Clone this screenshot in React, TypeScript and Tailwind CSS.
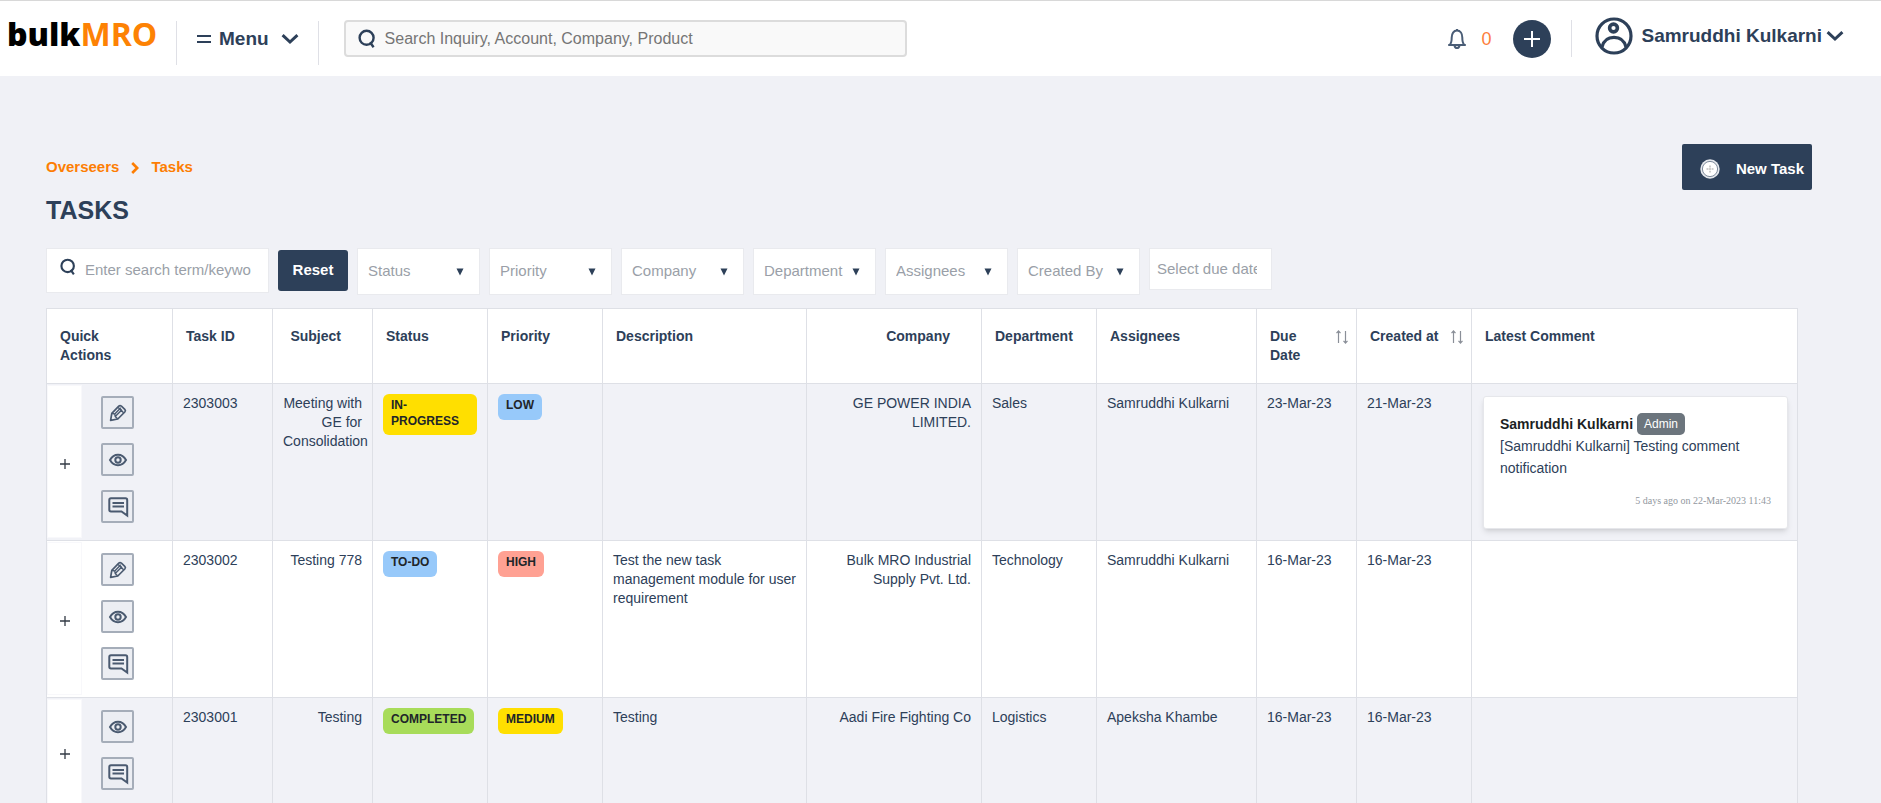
import type { ReactNode } from "react";

type Action = "edit" | "view" | "comment";

interface Comment {
  author: string;
  role: string;
  text: string;
  time: string;
}

interface Task {
  id: string;
  subject: string;
  status: string;
  priority: string;
  description: string;
  company: string;
  department: string;
  assignee: string;
  due: string;
  created: string;
  actions: Action[];
  comment?: Comment;
}

const tasks: Task[] = [
  {
    id: "2303003",
    subject: "Meeting with GE for Consolidation",
    status: "IN-PROGRESS",
    priority: "LOW",
    description: "",
    company: "GE POWER INDIA LIMITED.",
    department: "Sales",
    assignee: "Samruddhi Kulkarni",
    due: "23-Mar-23",
    created: "21-Mar-23",
    actions: ["edit", "view", "comment"],
    comment: {
      author: "Samruddhi Kulkarni",
      role: "Admin",
      text: "[Samruddhi Kulkarni] Testing comment notification",
      time: "5 days ago on 22-Mar-2023 11:43",
    },
  },
  {
    id: "2303002",
    subject: "Testing 778",
    status: "TO-DO",
    priority: "HIGH",
    description: "Test the new task management module for user requirement",
    company: "Bulk MRO Industrial Supply Pvt. Ltd.",
    department: "Technology",
    assignee: "Samruddhi Kulkarni",
    due: "16-Mar-23",
    created: "16-Mar-23",
    actions: ["edit", "view", "comment"],
  },
  {
    id: "2303001",
    subject: "Testing",
    status: "COMPLETED",
    priority: "MEDIUM",
    description: "Testing",
    company: "Aadi Fire Fighting Co",
    department: "Logistics",
    assignee: "Apeksha Khambe",
    due: "16-Mar-23",
    created: "16-Mar-23",
    actions: ["view", "comment"],
  },
];

const badgeColors: Record<string, string> = {
  "IN-PROGRESS": "bg-[#ffdf00]",
  MEDIUM: "bg-[#ffdf00]",
  LOW: "bg-[#97c9fa]",
  "TO-DO": "bg-[#97c9fa]",
  HIGH: "bg-[#ffa193]",
  COMPLETED: "bg-[#a8dc5a]",
};

const filters = ["Status", "Priority", "Company", "Department", "Assignees", "Created By"];

function SearchIcon({ className }: { className: string }) {
  return (
    <svg viewBox="0 0 18 20" className={className} fill="none" stroke="currentColor" strokeWidth="2.4" aria-hidden="true">
      <circle cx="8.6" cy="8.8" r="7" />
      <path d="M12 13.200l3.600 5" />
    </svg>
  );
}

function ChevronIcon({ className }: { className: string }) {
  return (
    <svg viewBox="0 0 18 12" className={className} fill="none" stroke="currentColor" strokeWidth="3" aria-hidden="true">
      <path d="M1.600 2.200L9 9l7.400-6.800" />
    </svg>
  );
}

function BellIcon() {
  return (
    <svg viewBox="0 0 20 22" className="h-[22px] w-5" fill="none" stroke="#4a5d76" strokeWidth="2" aria-hidden="true">
      <path d="M1.200 17h17.600M3 16.600c1.600-1.800 1.700-3.600 1.700-7C4.700 5.700 6.600 2.600 10 2.600s5.300 3.100 5.300 7c0 3.400.1 5.200 1.700 7" strokeLinejoin="round" />
      <path d="M7.500 17.500c.3 1.800 1.200 2.600 2.500 2.600s2.200-.8 2.500-2.600M10 2.800V1" />
    </svg>
  );
}

function UserIcon() {
  return (
    <svg viewBox="0 0 38 38" className="size-[38px] shrink-0" fill="none" stroke="currentColor" strokeWidth="3.200" aria-hidden="true">
      <circle cx="19" cy="19" r="17" />
      <circle cx="18.500" cy="11" r="3.900" strokeWidth="3.600" />
      <path d="M7 30c1.500-6 6-9.600 12-9.600S29.500 24 31 30" />
    </svg>
  );
}

const actionIcons: Record<Action, ReactNode> = {
  edit: (
    <svg viewBox="0 0 20 20" className="size-5 shrink-0" fill="none" stroke="currentColor" strokeWidth="1.700" strokeLinejoin="round" aria-hidden="true">
      <path d="M2.600 17.400l1.200-7L10.800 3.200q1.200-1.200 2.600 0l3.400 3.200q1.200 1.200 0 2.600L9.800 16z" />
      <path d="M3.800 10.400l3 .6.400 2.400 2.600 2.600M6.800 11l6-6.200M7.200 13.400l6.800-6.600M10.200 4.400l5.400 5.400" strokeWidth="1.400" />
    </svg>
  ),
  view: (
    <svg viewBox="0 0 20 20" className="size-5 shrink-0" fill="none" stroke="currentColor" strokeWidth="2" aria-hidden="true">
      <path d="M2 10c2-3.600 4.700-5.200 8-5.200s6 1.600 8 5.200c-2 3.600-4.700 5.200-8 5.200S4 13.600 2 10z" />
      <circle cx="10" cy="10" r="2.700" />
    </svg>
  ),
  comment: (
    <svg viewBox="0 0 22 22" className="size-[22px] shrink-0" fill="none" stroke="currentColor" strokeWidth="2" aria-hidden="true">
      <path d="M4 2.300h14.500q1.700 0 1.700 1.700v15.500l-5.700-4H4q-1.700 0-1.700-1.700V4q0-1.700 1.700-1.700z" />
      <path d="M5.500 7h11.500M5.500 10.500h11.500" strokeWidth="1.900" />
    </svg>
  ),
};

const actionLabels: Record<Action, string> = { edit: "Edit task", view: "View task", comment: "Comments" };

function Badge({ label }: { label: string }) {
  return (
    <span className={`inline-block min-h-[26px] rounded-md px-2 pt-[3px] pb-[6px] text-xs leading-4 font-bold text-[#212529] ${badgeColors[label]}`}>
      {label}
    </span>
  );
}

function Header() {
  return (
    <header className="flex h-[76px] items-center border-t border-[#d8d8d8] bg-white">
      <a href="#home" aria-label="bulkMRO" className="w-[170px] pb-[10px] pl-[7px] font-['Open_Sans',sans-serif] text-[32px] leading-10">
        <span className="font-extrabold text-black">bulk</span>
        <span className="font-bold text-[#fd8204]">MRO</span>
      </a>
      <div className="mt-2 ml-[6px] flex h-11 items-center border-x border-[#dfe0e6] pr-[19px] pl-5">
        <button type="button" className="flex items-center pb-[7px] text-[19px] font-bold">
          <span className="mr-2 block h-2 w-[14px] border-y-2 border-current" />
          Menu
          <ChevronIcon className="ml-3 h-3 w-[18px]" />
        </button>
      </div>
      <div className="ml-[25px] flex h-[37px] w-[563px] items-center rounded border-2 border-[#dcdcdc] bg-[#f9f9f9] px-3">
        <SearchIcon className="h-5 w-[18px] shrink-0" />
        <input
          type="search"
          aria-label="Search"
          placeholder="Search Inquiry, Account, Company, Product"
          className="ml-[9px] min-w-0 flex-1 bg-transparent text-base outline-none placeholder:text-[#757575]"
        />
      </div>
      <div className="ml-auto flex items-center">
        <button type="button" className="flex items-center gap-[14px] text-lg text-[#fd7e3c]">
          <BellIcon />0
        </button>
        <button type="button" aria-label="Create" className="ml-[22px] flex size-[38px] items-center justify-center rounded-full bg-[#2d4059] text-white">
          <svg viewBox="0 0 16 16" className="size-4" stroke="currentColor" strokeWidth="2" aria-hidden="true">
            <path d="M8 0v16M0 8h16" />
          </svg>
        </button>
        <div className="ml-5 h-[37px] w-px bg-[#dfe0e6]" />
        <button type="button" className="mr-[37px] ml-[23px] flex items-center pb-[5px] text-[19px] font-bold">
          <UserIcon />
          <span className="ml-2">Samruddhi Kulkarni</span>
          <ChevronIcon className="ml-1 h-3 w-[18px]" />
        </button>
      </div>
    </header>
  );
}

function Filters() {
  return (
    <form className="mt-[22px] flex items-start gap-[9px] text-[15px]">
      <div className="flex h-[45px] w-[223px] shrink-0 items-center border border-[#e9eaee] bg-white pr-[17px] pl-[13px]">
        <SearchIcon className="mb-2 h-[18px] w-4 shrink-0" />
        <input
          aria-label="Search tasks"
          placeholder="Enter search term/keyword"
          className="ml-[9px] min-w-0 flex-1 outline-none placeholder:text-[#9a9fa8]"
        />
      </div>
      <button type="reset" className="mt-[2px] h-[41px] w-[70px] shrink-0 rounded-[3px] bg-[#2d4059] font-bold text-white">
        Reset
      </button>
      {filters.map((name) => (
        <div key={name} className="relative w-[123px] shrink-0">
          <select
            aria-label={name}
            defaultValue=""
            className="h-[47px] w-full appearance-none border border-[#e9eaee] bg-white pl-[10px] text-[#9a9fa8] outline-none"
          >
            <option value="">{name}</option>
          </select>
          <svg viewBox="0 0 8 8" className="pointer-events-none absolute top-5 right-4 size-2 fill-[#2d4059]" aria-hidden="true">
            <path d="M0.500 0.500h7L4 7.500z" />
          </svg>
        </div>
      ))}
      <div className="flex h-[42px] w-[123px] shrink-0 items-center border border-[#e9eaee] bg-white pr-[14px] pl-[7px]">
        <input aria-label="Due date" placeholder="Select due date" className="w-full min-w-0 outline-none placeholder:text-[#9a9fa8]" />
      </div>
    </form>
  );
}

function CommentCard({ comment }: { comment: Comment }) {
  return (
    <article className="rounded-[3px] border border-[#e6e7eb] bg-white p-4 leading-[22px] shadow-md">
      <div className="flex items-center gap-1">
        <strong className="text-[#1c1f23]">{comment.author}</strong>
        <span className="rounded-[5px] bg-[#6c757d] px-[7px] text-xs leading-[22px] text-white">{comment.role}</span>
      </div>
      <p>{comment.text}</p>
      <p className="mt-[11px] text-right font-['Liberation_Serif',serif] text-[10px] leading-[22px] text-[#9298a0]">{comment.time}</p>
    </article>
  );
}

function SortArrows() {
  return (
    <svg viewBox="0 0 14 14" className="mt-[3px] h-[14px] w-[14px] shrink-0" fill="none" stroke="#8a8f98" strokeWidth="1.200" aria-hidden="true">
      <path d="M3.500 13V1M1.500 3.200L3.500 1l2 2.200M10.500 1v12M8.500 10.800l2 2.200 2-2.200" />
    </svg>
  );
}

const th = "border border-[#dee0e6] pt-[18px] pb-[18px] pl-[13px] pr-8 text-left align-top font-bold";
const thRight = "border border-[#dee0e6] pt-[18px] pb-[18px] pr-[31px] text-right align-top font-bold";
const td = "border border-[#dee0e6] px-[10px] pt-[10px] align-top";

function TaskTable() {
  return (
    <table className="mt-[13px] w-full table-fixed border-collapse text-sm leading-[19px]">
      <colgroup>
        <col className="w-[126px]" />
        <col className="w-[100px]" />
        <col className="w-[100px]" />
        <col className="w-[115px]" />
        <col className="w-[115px]" />
        <col className="w-[204px]" />
        <col className="w-[175px]" />
        <col className="w-[115px]" />
        <col className="w-[160px]" />
        <col className="w-[100px]" />
        <col className="w-[115px]" />
        <col />
      </colgroup>
      <thead className="bg-white">
        <tr>
          <th className={th}>Quick Actions</th>
          <th className={`${th} whitespace-nowrap`}>Task ID</th>
          <th className={thRight}>Subject</th>
          <th className={th}>Status</th>
          <th className={th}>Priority</th>
          <th className={th}>Description</th>
          <th className={thRight}>Company</th>
          <th className={th}>Department</th>
          <th className={th}>Assignees</th>
          {["Due Date", "Created at"].map((name) => (
            <th key={name} className="border border-[#dee0e6] pt-[18px] pr-[7px] pb-[18px] pl-[13px] text-left align-top font-bold">
              <button type="button" className="flex w-full justify-between text-left">
                <span className={name === "Due Date" ? "w-10" : "whitespace-nowrap"}>{name}</span>
                <SortArrows />
              </button>
            </th>
          ))}
          <th className={th}>Latest Comment</th>
        </tr>
      </thead>
      <tbody>
        {tasks.map((task) => (
          <tr key={task.id} className="odd:bg-[#f1f2f7] even:bg-white">
            <td className="border border-[#dee0e6] p-0 align-top">
              <div className="flex">
                <button
                  type="button"
                  aria-label={`Expand ${task.id}`}
                  className="mt-px mb-[2px] flex w-[35px] items-center justify-center border border-[#f8f8fb] bg-white pt-1"
                >
                  <svg viewBox="0 0 10 10" className="size-[10px]" stroke="#333b45" strokeWidth="1.300" aria-hidden="true">
                    <path d="M5 0v10M0 5h10" />
                  </svg>
                </button>
                <div className="flex flex-col gap-[14px] pt-3 pb-[17px] pl-[19px]">
                  {task.actions.map((action) => (
                    <button
                      key={action}
                      type="button"
                      aria-label={actionLabels[action]}
                      className="flex size-[33px] items-center justify-center rounded-[2px] border-2 border-[#a5adb9] bg-[#eceef3] text-[#4a5a70]"
                    >
                      {actionIcons[action]}
                    </button>
                  ))}
                </div>
              </div>
            </td>
            <td className={td}>{task.id}</td>
            <td className={`${td} text-right`}>{task.subject}</td>
            <td className={td}>
              <Badge label={task.status} />
            </td>
            <td className={td}>
              <Badge label={task.priority} />
            </td>
            <td className={td}>{task.description}</td>
            <td className={`${td} text-right`}>{task.company}</td>
            <td className={td}>{task.department}</td>
            <td className={td}>{task.assignee}</td>
            <td className={td}>{task.due}</td>
            <td className={td}>{task.created}</td>
            <td className="border border-[#dee0e6] pt-3 pr-[9px] pl-[11px] align-top">{task.comment && <CommentCard comment={task.comment} />}</td>
          </tr>
        ))}
      </tbody>
    </table>
  );
}

export default function App() {
  return (
    <div className="min-h-screen bg-[#f0f1f6] font-['Liberation_Sans',Arial,sans-serif] text-[#2d4059]">
      <Header />
      <main className="pt-[68px] pr-[83px] pl-[46px]">
        <div className="flex items-start justify-between">
          <div>
            <nav aria-label="Breadcrumb" className="mt-3 flex items-center text-[15px] leading-[22px] font-bold text-[#fd7e03]">
              <a href="#overseers">Overseers</a>
              <svg viewBox="0 0 8 12" className="mx-3 mt-[2px] h-3 w-2" fill="none" stroke="currentColor" strokeWidth="2.600" aria-hidden="true">
                <path d="M1.200 1l5 5-5 5" />
              </svg>
              <a href="#tasks">Tasks</a>
            </nav>
            <h1 className="mt-4 text-[25px] leading-8 font-bold">TASKS</h1>
          </div>
          <button type="button" className="-mr-[14px] flex h-[46px] items-center rounded-[2px] bg-[#2d4059] pt-1 pr-2 pl-[18px] text-[15px] font-bold text-white">
            <svg viewBox="0 0 20 20" className="mr-4 size-5" fill="none" aria-hidden="true">
              <circle cx="10" cy="10" r="9.700" fill="#e4e7ec" />
              <circle cx="10" cy="10" r="7.600" fill="#ffffff" stroke="#7d8a9b" />
              <path d="M10 6.500v7M6.500 10h7" stroke="#cfcfcf" strokeWidth="2" strokeDasharray="2 .6" />
            </svg>
            New Task
          </button>
        </div>
        <Filters />
        <TaskTable />
      </main>
    </div>
  );
}
